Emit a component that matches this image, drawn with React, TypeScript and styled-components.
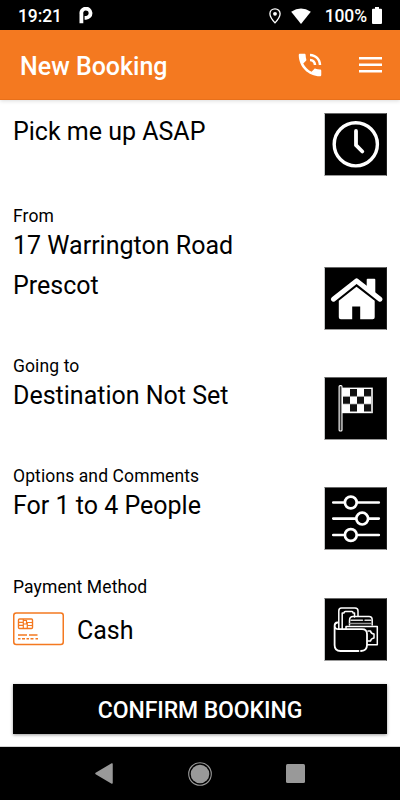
import React from "react";
import styled, { createGlobalStyle } from "styled-components";

const GlobalStyle = createGlobalStyle`
  * { box-sizing: border-box; }
  body { margin: 0; background: #fff; font-family: Roboto, sans-serif; color: #000; }
  svg { display: block; flex: none; }
`;

const Screen = styled.div`
  width: 400px;
  height: 800px;
  display: flex;
  flex-direction: column;
  overflow: hidden;
`;

const StatusBar = styled.div`
  height: 30px;
  flex: none;
  display: flex;
  align-items: center;
  padding: 1px 18px 0;
  background: #000;
  color: #fff;
  font-size: 17.5px;
  font-weight: 500;
  line-height: 30px;
`;

const StatusIcons = styled.div`
  margin-left: auto;
  display: flex;
  align-items: center;
`;

const Battery = styled.span`
  margin: 0 5px 0 4px;
  letter-spacing: -0.1px;
`;

const Time = styled.span`
  letter-spacing: -0.1px;
`;

const Carrier = styled.div`
  margin: -1px 0 0 17px;
`;

const Header = styled.header`
  height: 70px;
  flex: none;
  display: flex;
  align-items: center;
  padding: 0 18px 0 20px;
  background: #f47920;
  color: #fff;
  border-bottom: 1px solid #e8701a;
  box-shadow: 0 1px 4px rgba(0, 0, 0, 0.14);
`;

const Title = styled.h1`
  flex: 1;
  margin: 4px 0 0;
  font-size: 25px;
  font-weight: 500;
  line-height: 30px;
`;

const HeaderActions = styled.div`
  display: flex;
  align-items: center;
  gap: 34px;
`;

const Content = styled.main`
  flex: 1;
  display: flex;
  flex-direction: column;
  padding: 13px 13px 0;
  border-bottom: 1px solid #d4d4d4;
`;

const Row = styled.section<{ $height: number; $gap?: number }>`
  height: ${(p) => p.$height}px;
  margin-bottom: ${(p) => p.$gap ?? 26}px;
  flex: none;
  display: flex;
  justify-content: space-between;
  align-items: flex-end;
`;

const Details = styled.div`
  align-self: stretch;
`;

const Label = styled.div<{ $raise?: boolean }>`
  margin: ${(p) => (p.$raise ? "-1px 0 4px" : "0 0 3px")};
  font-size: 17.5px;
  letter-spacing: 0.11px;
  line-height: 22px;
`;

const Value = styled.div<{ $top?: number }>`
  margin-top: ${(p) => p.$top ?? 0}px;
  font-size: 25px;
  line-height: 30px;
`;

const Payment = styled.div`
  display: flex;
  align-items: center;
  gap: 13px;
  margin-top: 13px;
`;

const Tile = styled.div`
  width: 63px;
  height: 63px;
  background: #000;
  border: 1px solid;
  border-color: #666 #222 #999 #c4c8c8;
  display: grid;
  place-items: center;
  svg { margin: -1px; }
`;

const Confirm = styled.button`
  height: 50px;
  flex: none;
  margin-top: -3px;
  padding: 3px 0 0;
  border: 0;
  background: #000;
  color: #fff;
  font: 500 23px/30px Roboto, sans-serif;
  letter-spacing: -0.1px;
  box-shadow: 0 1px 3px rgba(0, 0, 0, 0.4);
`;

const NavBar = styled.nav`
  height: 53px;
  flex: none;
  display: flex;
  justify-content: space-between;
  align-items: center;
  padding: 0 95px 0 95px;
  background: #000;
`;

const ClockIcon = () => (
  <svg width="63" height="63" viewBox="0 0 63 63" fill="none" stroke="#fff">
    <circle cx="31.8" cy="31.3" r="21.6" strokeWidth="3.4" />
    <path d="M32 18V32.2L38.3 38.5" strokeWidth="3.8" strokeLinecap="round" strokeLinejoin="round" />
  </svg>
);

const HouseIcon = () => (
  <svg width="63" height="63" viewBox="0 0 63 63" fill="#fff" stroke="#fff" strokeLinejoin="round">
    <path d="M43.6 20V12.7H50.4V26.5Z" strokeWidth="1.8" />
    <path d="M9.4 32.2L32.6 13.9L56 32.2" fill="none" strokeWidth="5" strokeLinecap="round" />
    <path d="M32.5 19.8L14.8 33.7V50.2Q14.8 52.2 16.8 52.2H28.2V39.6H36.2V52.2H48.7Q50.7 52.2 50.7 50.2V33.7Z" stroke="none" />
  </svg>
);

const FlagIcon = () => (
  <svg width="63" height="63" viewBox="0 0 63 63">
    <path d="M18 10.6H48.8V36.2H18Z" fill="#fff" />
    <path d="M26 12h7v7.5h-7zM40 12h7v7.5h-7zM19 19.5h7v7.5h-7zM33 19.5h7v7.5h-7zM26 27h7v7.5h-7zM40 27h7v7.5h-7z" fill="#111" />
    <path d="M47.5 12V35.5M19 19.4H47M19 27H47" stroke="#aaa" strokeWidth=".7" />
    <rect x="15.1" y="8.6" width="2.9" height="45.4" rx="1" fill="#333" stroke="#fff" strokeWidth="1.1" />
  </svg>
);

const SlidersIcon = () => (
  <svg width="63" height="63" viewBox="0 0 63 63" fill="#000" stroke="#fff" strokeWidth="2.7" strokeLinecap="round">
    <path d="M9.3 15.5H54.8M9.3 31.6H54.8M9.3 48H54.8" />
    <circle cx="26.8" cy="15.5" r="5.9" />
    <circle cx="38.2" cy="31.6" r="5.9" />
    <circle cx="26.8" cy="48" r="5.9" />
  </svg>
);

const WalletIcon = () => (
  <svg width="63" height="63" viewBox="0 0 63 63" fill="none" stroke="#fff" strokeWidth="1.5" strokeLinejoin="round" strokeLinecap="round">
    <path d="M14.8 31V13Q14.8 10 17.5 10H31Q34 10 34 13V18M18.2 31V15H20Q20 13.5 21.5 13.5H28Q29 13.5 29 15H30.5V19" />
    <path d="M25.5 27V22.5Q25.5 18.6 29 18.6H45Q48.2 18.6 48.2 22V27" />
    <path d="M27 22.3H38.5M41 22.3H47" stroke="#ddd" />
    <path d="M26 25.6H47.5" stroke="#999" />
    <path d="M22 30.5V28.5H53.3V46.8H43.5" />
    <path d="M13.5 24.5Q10.6 24.7 10.6 28V47Q10.6 53 16.5 53H34.5M37 53Q43 52.6 43 47V36Q43 31.2 38 31.2H14.5Q10.8 31.2 10.7 28" strokeWidth="1.8" />
    <path d="M44 33H46.5Q47 35.6 50 36V40Q47 40.4 46.5 43H44" />
  </svg>
);

const CardIcon = () => (
  <svg width="51" height="34" viewBox="0 0 51 34" fill="none" stroke="#f47920">
    <rect x=".75" y="1.05" width="49.5" height="31.5" rx="2.5" strokeWidth="1.5" />
    <rect x="5.5" y="7" width="14" height="9.5" rx="1" strokeWidth="1.4" />
    <path d="M10.3 7V16.5M14.3 16.5V10.5H19.5M5.5 10.3H10.3M5.5 13.3H10.3M10.3 8.5H13.5V12H10.3M14.3 13.5H19.5" strokeWidth="1.2" />
    <path d="M5 23H14M16 23H24.5" strokeWidth="1.3" />
    <path d="M5 26.7H7.5M9 26.7H12M13.5 26.7H16M17.5 26.7H20.5M22.5 26.7H25" strokeWidth="1.5" />
  </svg>
);

export default function App() {
  return (
    <Screen>
      <GlobalStyle />
      <StatusBar>
        <Time>19:21</Time>
        <Carrier>
          <svg width="14" height="17" viewBox="0 0 14 17" fill="none" stroke="#fff" strokeWidth="3.8">
            <path d="M2.4 16.3V7A4.6 4.6 0 1 1 7 10.8H5.6" />
          </svg>
        </Carrier>
        <StatusIcons>
          <svg width="12" height="16" viewBox="0 0 12 16">
            <path d="M6 .8C3 .8 .9 3 .9 5.8C.9 9.3 6 14.9 6 14.9S11.1 9.3 11.1 5.8C11.1 3 9 .8 6 .8Z" fill="none" stroke="#fff" strokeWidth="1.3" />
            <circle cx="6" cy="5.8" r="1.9" fill="#fff" />
          </svg>
          <svg width="40" height="16" viewBox="0 0 40 16">
            <path d="M20 16L10.2 3.8Q20-3 29.8 3.8Z" fill="#fff" />
          </svg>
          <Battery>100%</Battery>
          <svg width="10" height="17" viewBox="0 0 10 17">
            <path d="M3 0H7V1.8H9Q10 1.8 10 2.8V16Q10 17 9 17H1Q0 17 0 16V2.8Q0 1.8 1 1.8H3Z" fill="#fff" />
          </svg>
        </StatusIcons>
      </StatusBar>
      <Header>
        <Title>New Booking</Title>
        <HeaderActions>
          <svg width="30" height="30" viewBox="0 0 24 24" fill="#fff">
            <path d="M20 15.5c-1.25 0-2.45-.2-3.57-.57-.1-.03-.21-.05-.31-.05-.26 0-.51.1-.71.29l-2.2 2.2c-2.83-1.44-5.15-3.75-6.59-6.59l2.2-2.21c.28-.26.36-.65.25-1C8.7 6.45 8.5 5.25 8.5 4c0-.55-.45-1-1-1H4c-.55 0-1 .45-1 1 0 9.39 7.61 17 17 17 .55 0 1-.45 1-1v-3.5c0-.55-.45-1-1-1zM19 12h2c0-4.97-4.03-9-9-9v2c3.87 0 7 3.13 7 7zm-4 0h2c0-2.76-2.24-5-5-5v2c1.66 0 3 1.34 3 3z" />
          </svg>
          <svg width="23" height="16" viewBox="0 0 23 16" fill="#fff">
            <path d="M0 0H23V2.5H0ZM0 6.5H23V9H0ZM0 13H23V15.5H0Z" />
          </svg>
        </HeaderActions>
      </Header>
      <Content>
        <Row $height={63} $gap={29}>
          <Details><Value $top={4}>Pick me up ASAP</Value></Details>
          <Tile><ClockIcon /></Tile>
        </Row>
        <Row $height={125}>
          <Details>
            <Label>From</Label>
            <Value $top={4}>17 Warrington Road</Value>
            <Value $top={10}>Prescot</Value>
          </Details>
          <Tile><HouseIcon /></Tile>
        </Row>
        <Row $height={84}>
          <Details>
            <Label $raise>Going to</Label>
            <Value>Destination Not Set</Value>
          </Details>
          <Tile><FlagIcon /></Tile>
        </Row>
        <Row $height={84}>
          <Details>
            <Label $raise>Options and Comments</Label>
            <Value>For 1 to 4 People</Value>
          </Details>
          <Tile><SlidersIcon /></Tile>
        </Row>
        <Row $height={85}>
          <Details>
            <Label>Payment Method</Label>
            <Payment>
              <CardIcon />
              <Value $top={5}>Cash</Value>
            </Payment>
          </Details>
          <Tile><WalletIcon /></Tile>
        </Row>
        <Confirm>CONFIRM BOOKING</Confirm>
      </Content>
      <NavBar>
        <svg width="18" height="21" viewBox="0 0 18 21"><path d="M17 1V20L1 10.5Z" fill="#999" stroke="#999" strokeWidth="1.5" strokeLinejoin="round" /></svg>
        <svg width="24" height="24" viewBox="0 0 24 24"><circle cx="12" cy="12" r="11.3" fill="none" stroke="#999" strokeWidth="1.1" /><circle cx="12" cy="12" r="9.3" fill="#999" /></svg>
        <svg width="19" height="19" viewBox="0 0 19 19"><rect width="19" height="19" rx="1.5" fill="#999" /></svg>
      </NavBar>
    </Screen>
  );
}
